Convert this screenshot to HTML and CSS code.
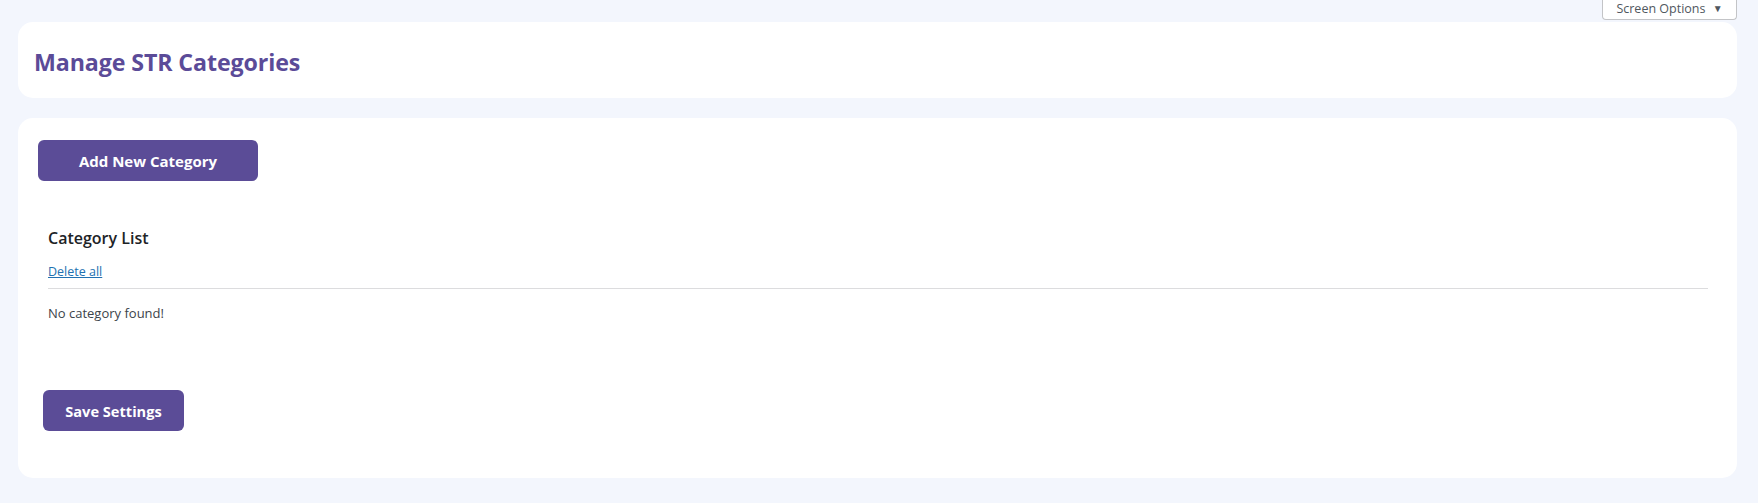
FILE: index.html
```html
<!DOCTYPE html>
<html>
    <head>
        <meta name="viewport" content="width=device-width, initial-scale=1">
        <link rel="stylesheet" href="styles.css">
    </head>
    <body>
        <div class="screen-meta">
            <button class="screen-options">Screen Options <span class="caret">&#9660;</span></button>
        </div>
        <div class="wrap">
            <div class="card title-card">
                <h1>Manage STR Categories</h1>
            </div>
            <div class="card main-card">
                <button class="btn btn-add">Add New Category</button>
                <div class="cat-list">
                    <h3>Category List</h3>
                    <a href="#" class="delete-all">Delete all</a>
                    <div class="rule"></div>
                    <p class="empty">No category found!</p>
                </div>
                <div class="actions">
                    <button class="btn btn-save">Save Settings</button>
                </div>
            </div>
        </div>
    </body>
</html>
```
FILE: styles.css
```css
html, body { margin: 0; padding: 0; background-color: #f3f6fd; font-family: "Open Sans", "Noto Sans", sans-serif; color: #3c434a; }

.screen-meta { display: flex; justify-content: flex-end; padding-right: 21px; height: 21px; }
.screen-options {
    width: 135px;
    height: 21px;
    margin-top: -1px;
    padding: 0 0 2px 0;
    background: #fff;
    border: 1px solid #c3c4c7;
    border-top: none;
    border-radius: 0 0 4px 4px;
    font-family: "Open Sans", sans-serif;
    font-size: 12.5px;
    color: #50575e;
    box-sizing: border-box;
}
.screen-options .caret { font-size: 10px; margin-left: 4px; vertical-align: 1px; }

.wrap { padding: 1px 21px 0 18px; display: flex; flex-direction: column; gap: 20px; }
.card { background: #fff; border-radius: 15px; }

.title-card { height: 76px; display: flex; align-items: center; padding: 3px 0 0 16px; box-sizing: border-box; }
.title-card h1 { margin: 0; font-size: 23.2px; font-weight: 700; color: #5b4b98; letter-spacing: -0.1px; }

.main-card { padding: 22px 29px 46px 20px; height: 360px; box-sizing: border-box; }

.btn {
    display: block;
    background: #5b4c97;
    color: #fff;
    border: none;
    border-radius: 6px;
    height: 41px;
    padding: 0;
    font-family: "Open Sans", sans-serif;
    font-weight: 700;
    font-size: 15px;
}
.btn-add { width: 220px; }
.btn-save { width: 141px; font-size: 14.6px; }

.cat-list { padding: 0 0 0 10px; margin-top: 46px; }
.cat-list h3 { margin: 0; font-size: 16px; font-weight: 600; color: #1d2327; line-height: 22px; }
.delete-all { display: block; width: fit-content; margin-top: 15px; font-size: 12.5px; color: #2271b1; line-height: 16px; }
.rule { border-top: 1px solid #dcdcde; margin-top: 8px; }
.empty { margin: 15px 0 0; font-size: 13px; line-height: 18px; }

.actions { margin-top: 68px; padding-left: 5px; }
```
